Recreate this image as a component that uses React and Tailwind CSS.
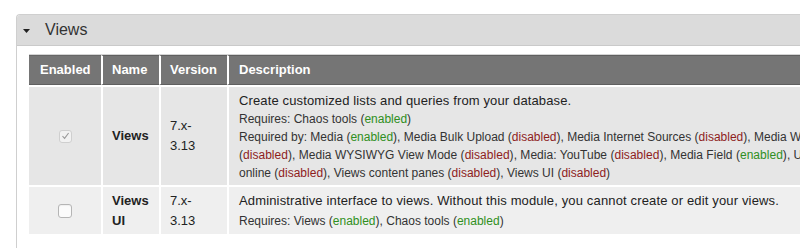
import React from "react";

const En = () => <span className="text-[#2f8f22]">enabled</span>;
const Dis = () => <span className="text-[#8e1d1d]">disabled</span>;

export default function App() {
  return (
    <div
      className="w-[800px] h-[248px] overflow-hidden bg-white text-[#222]"
      style={{ fontFamily: '"Liberation Sans", Arial, sans-serif' }}
    >
      <div className="ml-4 mt-[14px] w-[1000px] h-[300px] border-l border-t border-[#cfcfcf] rounded-tl-[4px]">
        <div className="h-[31px] bg-[#dbdbdb] border-b border-[#cacaca] flex items-center pl-[6px] rounded-tl-[3px]">
          <svg width="7" height="4" viewBox="0 0 7 4" className="mt-[2px]">
            <polygon points="0,0 7,0 3.5,4" fill="#222" />
          </svg>
          <span className="ml-[15px] text-[16px] text-[#333] leading-none">Views</span>
        </div>
        <div className="pl-3 pt-[8px]">
          <table className="border-separate border-spacing-0 table-fixed w-[960px] border-t border-[#d4d4d4]">
            <colgroup>
              <col className="w-[72px]" />
              <col className="w-[58px]" />
              <col className="w-[68px]" />
              <col />
            </colgroup>
            <thead>
              <tr className="text-white text-[13px] font-bold text-left">
                <th className="h-[30px] bg-[#757575] border-y border-y-[#5f5f5f] border-t-[#666] pl-[11px] font-bold">Enabled</th>
                <th className="bg-[#757575] border-y border-[#5f5f5f] border-l-2 border-l-white pl-[9px] font-bold">Name</th>
                <th className="bg-[#757575] border-y border-[#5f5f5f] border-l-2 border-l-white pl-[9px] font-bold">Version</th>
                <th className="bg-[#757575] border-y border-[#5f5f5f] border-l-2 border-l-white pl-[10px] font-bold">Description</th>
              </tr>
            </thead>
            <tbody className="text-[13px]">
              <tr className="bg-[#e6e6e6]">
                <td className="border-t-2 border-white align-middle">
                  <div className="flex justify-center">
                    <div className="w-[13px] h-[13px] rounded-[3px] border border-[#cfcfcf] bg-[#f2f2f2] flex items-center justify-center">
                      <svg width="9" height="8" viewBox="0 0 9 8">
                        <path d="M1.5 4.2 L3.6 6.4 L7.6 1" fill="none" stroke="#9a9a9a" strokeWidth="1.1" />
                      </svg>
                    </div>
                  </div>
                </td>
                <td className="border-t-2 border-l-2 border-white pl-[9px] font-bold leading-[20px]">Views</td>
                <td className="border-t-2 border-l-2 border-white pl-[9px] leading-[20px]">7.x-<br />3.13</td>
                <td className="border-t-2 border-l-2 border-white pl-[10px] pt-[5px] pb-[3px] align-top">
                  <div className="leading-[18px] tracking-[0.13px]">Create customized lists and queries from your database.</div>
                  <div className="text-[12px] leading-[18px] text-[#333] whitespace-nowrap">
                    <div>Requires: Chaos tools (<En />)</div>
                    <div>Required by: Media (<En />), Media Bulk Upload (<Dis />), Media Internet Sources (<Dis />), Media WYSIWYG</div>
                    <div className="tracking-[0.03px]">(<Dis />), Media WYSIWYG View Mode (<Dis />), Media: YouTube (<Dis />), Media Field (<En />), Users</div>
                    <div>online (<Dis />), Views content panes (<Dis />), Views UI (<Dis />)</div>
                  </div>
                </td>
              </tr>
              <tr className="bg-[#efefef]">
                <td className="border-t-2 border-white align-middle">
                  <div className="flex justify-center">
                    <div className="w-[14px] h-[14px] rounded-[3px] border border-[#b5b5b5] bg-[#fbfbfb] shadow-[inset_0_1px_1px_rgba(0,0,0,0.05)]"></div>
                  </div>
                </td>
                <td className="border-t-2 border-l-2 border-white pl-[9px] pr-[9px] font-bold leading-[20px]">Views UI</td>
                <td className="border-t-2 border-l-2 border-white pl-[9px] leading-[20px]">7.x-<br />3.13</td>
                <td className="border-t-2 border-l-2 border-white pl-[10px] pt-[5px] pb-[4px] align-top">
                  <div className="leading-[18px] tracking-[0.15px]">Administrative interface to views. Without this module, you cannot create or edit your views.</div>
                  <div className="text-[12px] leading-[18px] mt-[2px] text-[#333] whitespace-nowrap">
                    Requires: Views (<En />), Chaos tools (<En />)
                  </div>
                </td>
              </tr>
            </tbody>
          </table>
        </div>
      </div>
    </div>
  );
}
